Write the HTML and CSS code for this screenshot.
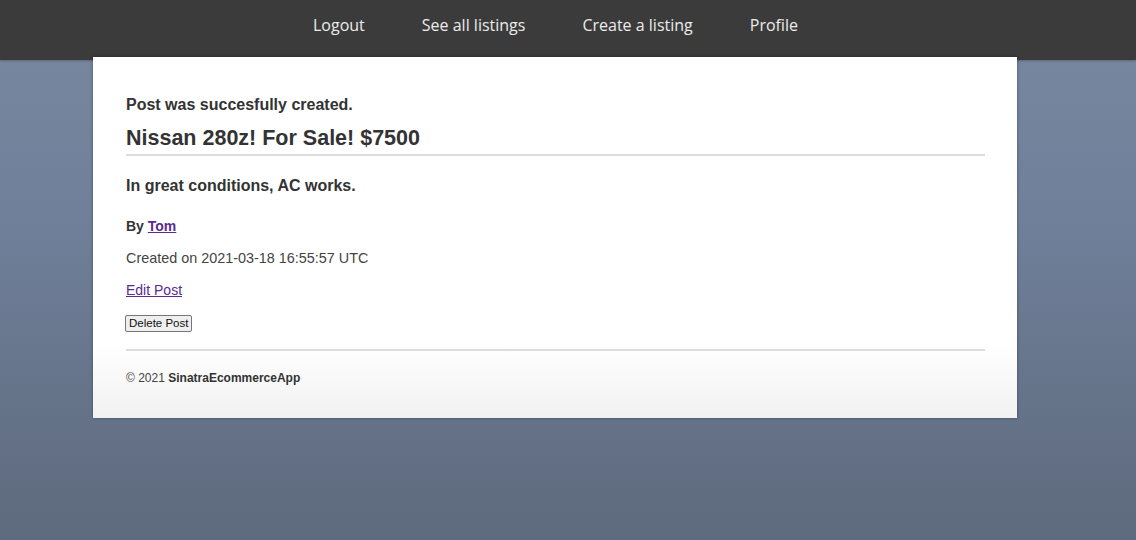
FILE: index.html
```html
<!DOCTYPE html>
<html lang="en">
<head>
<meta charset="utf-8">
<title>Nissan 280z! For Sale! $7500</title>
<link rel="stylesheet" href="styles.css">
</head>
<body>
<nav class="topnav">
  <a href="#" class="navlink">Logout</a>
  <a href="#" class="navlink">See all listings</a>
  <a href="#" class="navlink">Create a listing</a>
  <a href="#" class="navlink">Profile</a>
</nav>
<main class="card">
  <p class="flash">Post was succesfully created.</p>
  <h1 class="title">Nissan 280z! For Sale! $7500</h1>
  <hr class="rule titlerule">
  <p class="desc">In great conditions, AC works.</p>
  <p class="author">By <a href="#" class="link">Tom</a></p>
  <p class="meta">Created on 2021-03-18 16:55:57 UTC</p>
  <p class="edit"><a href="#" class="link">Edit Post</a></p>
  <form class="delform"><button type="button" class="delbtn">Delete Post</button></form>
  <hr class="rule footrule">
  <footer class="foot">© 2021 <strong>SinatraEcommerceApp</strong></footer>
</main>
</body>
</html>
```
FILE: styles.css
```css
html, body {
  margin: 0;
  padding: 0;
}
body {
  height: 540px;
  background: linear-gradient(to bottom, #7888a0 0%, #70809a 40%, #5e6a7d 100%);
  font-family: "Liberation Sans", Arial, sans-serif;
  color: #333;
  overflow: hidden;
}
.topnav {
  height: 60px;
  background: #3b3b3b;
  display: flex;
  justify-content: center;
  align-items: center;
  gap: 57px;
  padding-right: 25px;
  padding-bottom: 10px;
  box-sizing: border-box;
  box-shadow: 0 1px 2px rgba(0,0,0,0.25);
}
.navlink {
  font-family: "Open Sans", sans-serif;
  font-size: 16px;
  color: #ececec;
  text-decoration: none;
}
.card {
  display: block;
  margin: -3px 0 0 93px;
  width: 924px;
  height: 361px;
  box-sizing: border-box;
  padding: 39px 32px 0 33px;
  background: linear-gradient(to bottom, #ffffff 0%, #ffffff 80%, #f1f1f1 100%);
  box-shadow: 0 0 3px rgba(0,0,0,0.35);
}
.flash {
  margin: 0;
  font-size: 16px;
  font-weight: bold;
  line-height: 18px;
}
.title {
  margin: 12px 0 0 0;
  font-size: 21.5px;
  line-height: 24px;
  font-weight: bold;
}
.rule {
  margin: 5px 0 0 0;
  border: 0;
  height: 2px;
  background: #dcdcdc;
}
.titlerule {
  margin-top: 4px;
}
.desc {
  margin: 21px 0 0 0;
  font-size: 16px;
  font-weight: bold;
  line-height: 18px;
}
.author {
  margin: 23px 0 0 0;
  font-size: 14px;
  font-weight: bold;
  line-height: 16px;
}
.link {
  color: #5b2a8f;
  text-decoration: underline;
}
.meta {
  margin: 16px 0 0 0;
  font-size: 14.4px;
  line-height: 16px;
  color: #444;
}
.edit {
  margin: 16px 0 0 0;
  font-size: 14px;
  line-height: 16px;
}
.delform {
  margin: 17px 0 0 0;
  display: flex;
}
.delbtn {
  font-family: "Liberation Sans", Arial, sans-serif;
  font-size: 11.5px;
  padding: 0 3px;
  margin-left: -1px;
  color: #111;
  background: #efefef;
  border: 1px solid #767676;
  border-radius: 2px;
  height: 17px;
  line-height: 13px;
}
.footrule {
  margin-top: 17px;
}
.foot {
  margin-top: 20px;
  font-size: 12px;
  line-height: 14px;
  color: #444;
}
.foot strong {
  color: #333;
}
```
